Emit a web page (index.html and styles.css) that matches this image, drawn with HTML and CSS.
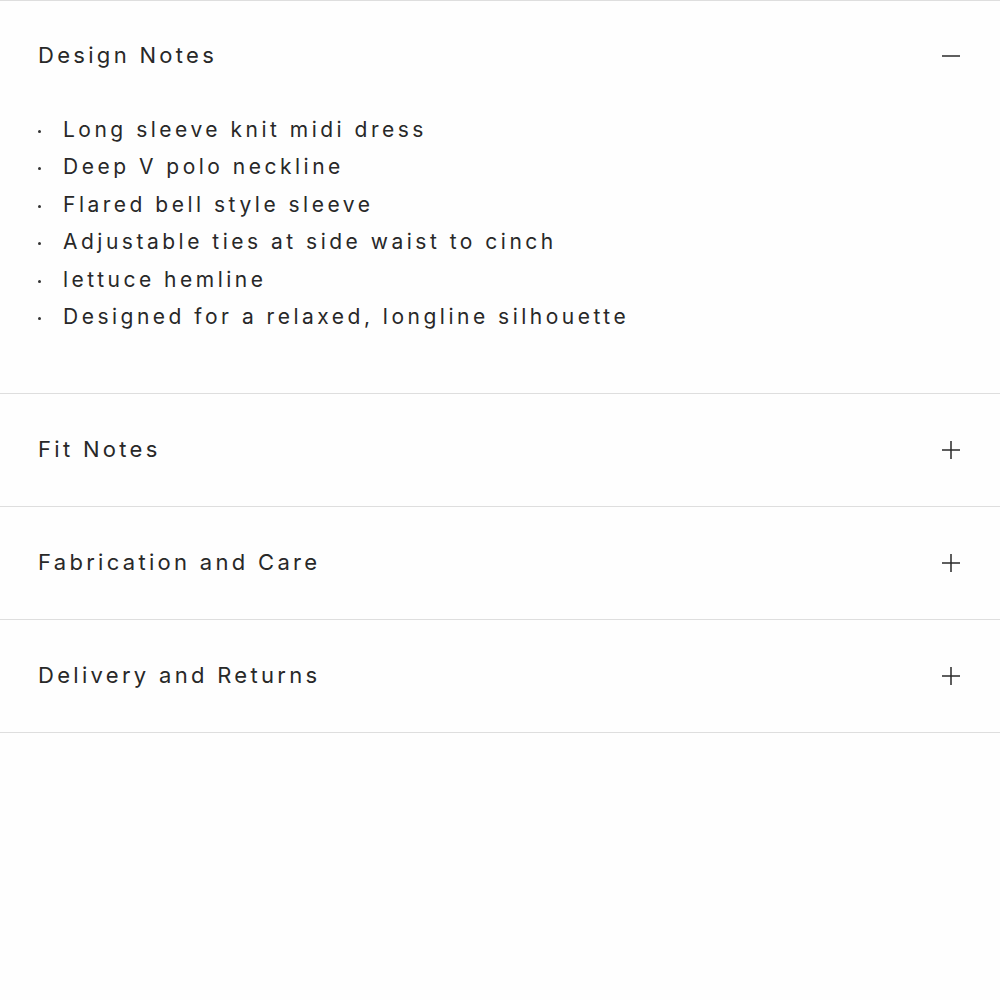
FILE: index.html
```html
<!DOCTYPE html>
<html lang="en">
<head>
<meta charset="utf-8">
<title>Product details</title>
<link rel="stylesheet" href="styles.css">
</head>
<body>
<div class="accordion">
  <section class="item open">
    <div class="item-head">
      <span class="item-title">Design Notes</span>
      <svg class="toggle" viewBox="0 0 20 20"><path d="M1 10H19"/></svg>
    </div>
    <ul class="item-body">
      <li>Long sleeve knit midi dress</li>
      <li>Deep V polo neckline</li>
      <li>Flared bell style sleeve</li>
      <li>Adjustable ties at side waist to cinch</li>
      <li>lettuce hemline</li>
      <li>Designed for a relaxed, longline silhouette</li>
    </ul>
  </section>
  <section class="item">
    <div class="item-head">
      <span class="item-title">Fit Notes</span>
      <svg class="toggle" viewBox="0 0 20 20"><path d="M1 10H19M10 1V19"/></svg>
    </div>
  </section>
  <section class="item">
    <div class="item-head">
      <span class="item-title">Fabrication and Care</span>
      <svg class="toggle" viewBox="0 0 20 20"><path d="M1 10H19M10 1V19"/></svg>
    </div>
  </section>
  <section class="item">
    <div class="item-head">
      <span class="item-title">Delivery and Returns</span>
      <svg class="toggle" viewBox="0 0 20 20"><path d="M1 10H19M10 1V19"/></svg>
    </div>
  </section>
</div>
</body>
</html>
```

FILE: styles.css
```css
html, body {
  margin: 0;
  padding: 0;
  background: #fefefe;
}

body {
  font-family: Inter, "Noto Sans", sans-serif;
  color: #282828;
}

.accordion {
  border-top: 1px solid #dedede;
}

.item {
  border-bottom: 1px solid #dedede;
}

.item-head {
  display: flex;
  align-items: center;
  justify-content: space-between;
  height: 112px;
  padding: 0 39px 0 38px;
}

.item.open .item-head {
  height: 110px;
}

.item-title {
  padding-bottom: 2px;
  font-size: 22px;
  font-weight: 400;
  letter-spacing: 3.3px;
}

.toggle {
  width: 20px;
  height: 20px;
  fill: none;
  stroke: #2a2a2a;
  stroke-width: 1.5;
}

.item-body {
  list-style: none;
  margin: 0;
  padding: 0 38px 58px 38px;
}

.item-body li {
  position: relative;
  padding-left: 25px;
  font-size: 21px;
  font-weight: 400;
  line-height: 37.4px;
  letter-spacing: 3.5px;
}

.item-body li::before {
  content: "";
  position: absolute;
  left: 0;
  top: 19px;
  width: 3px;
  height: 3px;
  border-radius: 50%;
  background: #333;
}
```
